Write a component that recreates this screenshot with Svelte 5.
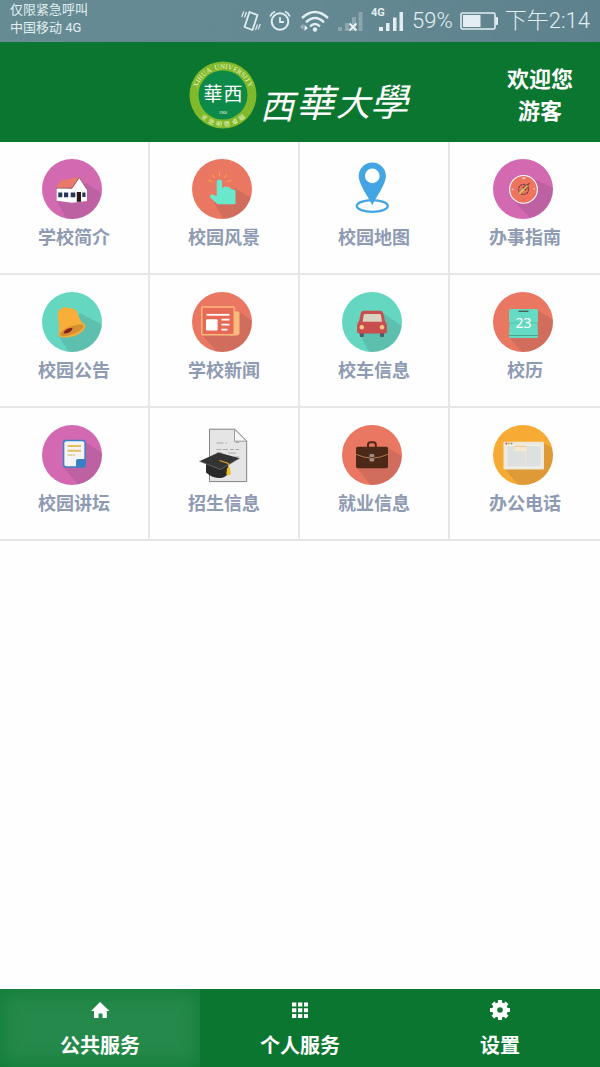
<script lang="ts">
  const services = [
    { id: 'about', label: '学校简介' },
    { id: 'scenery', label: '校园风景' },
    { id: 'map', label: '校园地图' },
    { id: 'guide', label: '办事指南' },
    { id: 'notice', label: '校园公告' },
    { id: 'news', label: '学校新闻' },
    { id: 'bus', label: '校车信息' },
    { id: 'calendar', label: '校历' },
    { id: 'forum', label: '校园讲坛' },
    { id: 'admission', label: '招生信息' },
    { id: 'career', label: '就业信息' },
    { id: 'office', label: '办公电话' },
  ];

  const discs: Record<string, string> = {
    about: '#d369b1',
    scenery: '#ea7762',
    guide: '#d369b1',
    notice: '#65d6bf',
    news: '#ea7762',
    bus: '#65d6bf',
    calendar: '#ea7762',
    forum: '#d369b1',
    career: '#ea7762',
    office: '#f7ab35',
  };

  // long shadow cast to the lower right, clipped to the disc
  const shadows: Record<string, string> = {
    about: '44 24 64 37 64 64 27 64 15 42',
    scenery: '43 29 64 42 64 64 34 64 22 44',
    guide: '41 20 64 31 64 64 42 64 20 41',
    notice: '38 21 64 35 64 64 29 64 16 43',
    news: '47 19 64 32 64 64 29 64 10 43',
    bus: '40 20 64 37 64 64 29 64 17 41',
    calendar: '44 18 64 30 64 64 32 64 16 45',
    forum: '43 17 64 30 64 64 40 64 22 43',
    career: '45 22 64 34 64 64 32 64 14 42',
    office: '50 18 64 25 64 64 29 64 11 43',
  };

  const tabs = [
    { id: 'home', label: '公共服务' },
    { id: 'grid', label: '个人服务' },
    { id: 'gear', label: '设置' },
  ];
  let current = $state('home');
</script>

{#snippet serviceIcon(id: string)}
  <svg class="service-icon" viewBox="0 0 64 60" aria-hidden="true">
    {#if discs[id]}
      <circle cx="30" cy="30" r="30" fill={discs[id]} />
      <g clip-path="url(#disc)">
        <polygon points={shadows[id]} fill="#303040" opacity=".13" />
      </g>
    {/if}
    {#if id === 'about'}
      <path d="M14.7 28.5 29.7 29.5 37.5 18.5 45 30.5V42L30 43.7 14.7 41.7z" fill="#fff" />
      <path d="M13.7 28.8 19.5 21.5 37 18 30 28.8z" fill="#e97a68" />
      <path d="M14 29.2 30 29.2 37.3 18.6 45 30.5" fill="none" stroke="#713c48" stroke-width=".7" />
      <path d="M16.3 33.4h4v4.8h-4zM22 33.4h4.2v4.8H22zM28.7 33.4h4.6v4.8h-4.6zM40.3 33.4h3.2v4.6h-3.2z" fill="#29375f" />
      <path d="M34.8 33h4.2v9.8h-4.2z" fill="#2b1718" />
    {:else if id === 'scenery'}
      <path d="M27.4 13.5v4M20.3 15.5l2 3.4M34.6 15.5l-2 3.4M16 21.3l4.4 1.4M39.4 21.3 35 22.7" stroke="#f9a83c" stroke-width="1" />
      <path d="M24.7 37V23.5q0-3 2.7-3t2.7 3V29l3-1.4 4.3.7 2.2 1.9 3.9 1v14H25.500L18.3 38.500q-1-3.300 2-3z" fill="#6ae8cc" />
    {:else if id === 'map'}
      <ellipse cx="30.3" cy="47" rx="15.5" ry="5.8" fill="none" stroke="#43a5e3" stroke-width="2.3" />
      <path d="M30.3 46.5C28 40 16.7 26 16.7 17a13.6 13.6 0 0 1 27.2 0C43.9 26 32.6 40 30.3 46.5z" fill="#43a5e3" />
      <circle cx="30.3" cy="16.9" r="7.3" fill="#fff" />
    {:else if id === 'guide'}
      <circle cx="30.5" cy="30.4" r="13.9" fill="#ef745e" stroke="#fff" stroke-width="1.1" />
      <circle cx="30.5" cy="30.4" r="5" fill="none" stroke="#6d3540" stroke-width="1.2" stroke-dasharray="2 .8" />
      <path d="M37.3 23 32.5 31.8 29 29z" fill="#703e43" />
      <path d="M23.5 37.5 28.8 28.8 32.3 32z" fill="#b58c79" />
      <path d="M26.5 34.5 34.5 26.5" stroke="#f2bd50" stroke-width="1.7" />
      <path d="M29.2 18.2h3v2h-3zM18.7 29.7h2v1.6h-2zM40.3 29h1.6v1.6h-1.6z" fill="#d2bfd8" />
      <path d="M30 41h1.5" stroke="#b55e55" />
    {:else if id === 'notice'}
      <path d="M16.3 19.5q.8-2.600 3.600-3 1.600-2.300 4.100-1.300l1.500 1q5-.5 7.700 1.500c3.500 3 3.500 9.500 7.700 13.300 2.300 1.500 3.400 3 1.800 5.300C39 43 28 47 18.500 45c-2.300-.5-2.500-2-1.800-4C18 35 15 25 16.300 19.500z" fill="#f8ae38" />
      <ellipse cx="29.7" cy="38.3" rx="12.7" ry="4" fill="#d68f30" transform="rotate(-21 29.7 38.3)" />
      <path d="M21.5 41.3C22.5 37.5 26 36 30.5 36c0 3-4.500 6-9 5.300z" fill="#861f20" />
    {:else if id === 'news'}
      <path d="M42 19.500h4.500q1 0 1 1v20q0 3-3 3H38z" fill="#fcbb7c" />
      <rect x="9.8" y="15" width="32.4" height="27.8" rx="1" fill="#e76a57" stroke="#fcbb7c" stroke-width="1.4" />
      <path d="M14.5 22.8h23" stroke="#fff" stroke-width="1.8" />
      <rect x="14" y="27.3" width="11.6" height="11.2" rx="1" fill="#fff" />
      <path d="M29.5 27.7h8M29.5 32.7h8M29.5 37.7h6" stroke="#fff" stroke-width="1.8" />
    {:else if id === 'bus'}
      <path d="M17.8 38h4v6q0 1-1 1h-2q-1 0-1-1zM38 38h4v6q0 1-1 1h-2q-1 0-1-1z" fill="#535a6e" />
      <path d="M21.5 18.7h17q2.300 0 2.700 2.500L43 29q2 2 2 5v5q0 2.500-2.500 2.500h-25Q15 41.5 15 39v-5q0-3 2-5l1.800-7.800q.4-2.500 2.700-2.500z" fill="#c84f50" />
      <path d="M23 22h14.5q1.300 0 1.500 1.300l1 6.400H20.700l1-6.400Q21.800 22 23 22z" fill="#d9d4c0" />
      <circle cx="19.8" cy="35.3" r="2.2" fill="#fac886" />
      <circle cx="40" cy="35.3" r="2.2" fill="#fac886" />
    {:else if id === 'calendar'}
      <path d="M17.5 17h26q1.500 0 1.500 1.500V30l-.6 1L45 43v1.500q0 1.500-1.500 1.500h-26q-1.500 0-1.500-1.500V43l.6-12-.6-1V18.500q0-1.500 1.500-1.500z" fill="#65dbc3" />
      <path d="M16.5 31h28" stroke="#4fb9a3" stroke-width=".7" />
      <path d="M16 43.5h29" stroke="#46947f" stroke-width=".8" />
      <path d="M25.5 19.3h10" stroke="#476459" stroke-width="1.4" />
      <text x="30.5" y="36" class="day">23</text>
    {:else if id === 'forum'}
      <rect x="21.6" y="15.6" width="21.5" height="26.5" rx="2.5" fill="#f4f4f4" stroke="#3a7fc5" stroke-width="1.5" />
      <path d="M34 42.500V36q0-2 2-2h7.500v6l-2.500 2.500z" fill="#3a7fc5" />
      <path d="M25.5 21h13.500M25.500 25.700h13.500" stroke="#e5bd5c" stroke-width="2" />
      <path d="M25.5 30h7.500" stroke="#cdb563" stroke-width="1.2" stroke-dasharray="4.5 .6" />
    {:else if id === 'admission'}
      <path d="M17.5 4.200h25.200l12 12v40.400H17.500z" fill="#e5e5e5" stroke="#777" stroke-width=".9" />
      <path d="M42.5 4.200v12h12.200z" fill="#f6f6f6" stroke="#888" stroke-width=".8" />
      <path d="M24.5 18h7M33.500 18h1.500M43.500 17.500h3.500M24.500 24.500h5M31 24.500h5M38 24.500h4M43.500 24.500H47M24.500 28h6M36 28h8M42 32h5" stroke="#999" stroke-width=".8" />
      <path d="M14 38v9.500q6 5.500 14 5.500 5 0 9-5V36z" fill="#292929" />
      <path d="M7.3 36.200 26.500 27.500 47.500 33.300 28.500 44.500z" fill="#343434" />
      <path d="M7.3 36.200 28.500 44.500 47.500 33.300" fill="none" stroke="#777" stroke-width=".7" />
      <path d="M27.5 35.500 36.500 38.500V45" fill="none" stroke="#d7a925" stroke-width="1.1" />
      <path d="M35 43h3l.8 6.500q-2.300 1.500-4.500 0z" fill="#e7bd20" />
    {:else if id === 'career'}
      <path d="M26 23v-3q0-2.700 2.500-2.700h2.800q2.500 0 2.500 2.700v3" fill="none" stroke="#4b2817" stroke-width="2" />
      <rect x="14" y="21.8" width="32" height="21.5" rx="1.7" fill="#4b2817" />
      <path d="M14 29.3q16 7.500 32 0" fill="none" stroke="#ad7753" stroke-width="1" />
      <rect x="27.5" y="29" width="4.7" height="7.5" rx=".8" fill="#a18b82" />
      <path d="M27.5 32.5h4.700" stroke="#56392d" />
    {:else if id === 'office'}
      <rect x="10.5" y="16.8" width="40.5" height="27.7" rx="1.3" fill="#ece8dc" />
      <path d="M13.8 20.500h34.500V42H13.800z" fill="#dce0df" stroke="#faf8ef" stroke-width=".8" />
      <path d="M32.5 22v20" stroke="#eee7d6" stroke-width="1" />
      <path d="M21.5 21.500h12v4.700h-12z" fill="#f5e8cd" />
      <path d="M21.5 21.300h12" stroke="#dfbd7c" stroke-width=".8" />
      <circle cx="13.3" cy="18.5" r="1" fill="#d44b3f" />
      <circle cx="15.9" cy="18.5" r="1" fill="#e6a13c" />
      <circle cx="18.5" cy="18.5" r="1" fill="#76a36f" />
    {/if}
  </svg>
{/snippet}

<div class="screen">
  <div class="status-bar">
    <div class="carrier">
      <span>仅限紧急呼叫</span>
      <span>中国移动 4G</span>
    </div>
    <div class="indicators">
      <svg width="20" height="24" viewBox="0 0 20 24" fill="none" stroke="#e2eef1" aria-hidden="true">
        <path d="M8.5 3 16.500 6 11.500 21 3.500 18z" stroke-width="1.8" stroke-linejoin="round" />
        <path d="M.8 8 2.800 2.500M3.500 8.500 5.500 3M14.500 21 16.500 15.500M17.200 20.500l2-5.500" stroke-width="1.2" />
      </svg>
      <svg width="24" height="24" viewBox="0 0 24 24" fill="none" stroke="#e2eef1" aria-hidden="true">
        <circle cx="12" cy="12.5" r="8.3" stroke-width="2" />
        <path d="M12 8v5h4M2 7.500Q3.500 4 7 2.500M22 7.500Q20.500 4 17 2.500" stroke-width="1.8" />
      </svg>
      <svg width="30" height="24" viewBox="0 0 30 24" fill="none" stroke="#e2eef1" aria-hidden="true">
        <path d="M3 9Q16 -3 29 9M7 13.300q9-8.500 18 0M11 17.300q5-4.500 10 0" stroke-width="2.4" />
        <circle cx="16" cy="20.5" r="2.2" fill="#e2eef1" stroke="none" />
        <path d="M4.500 14.500v6.500L1 17.800z" fill="#9cb5bc" stroke="none" />
        <path d="M5.500 16v6l3.500-3z" fill="#e2eef1" stroke="none" />
      </svg>
      <svg width="28" height="24" viewBox="0 0 28 24" aria-hidden="true">
        <path d="M2 18h4v4H2zM9 14h4v8H9zM16 8h4v14h-4zM22.500 3h4v19h-4z" fill="#8ba6ae" />
        <path d="m13.500 14.500 7 7m0-7-7 7" stroke="#edf5f7" stroke-width="1.8" />
      </svg>
      <svg width="34" height="28" viewBox="0 0 34 28" aria-hidden="true">
        <text x="0" y="9" class="network">4G</text>
        <path d="M8 20h4v4H8zM15 16h3.500v8H15zM22 10.500h3.500V24H22zM28.500 5h3.500v19h-3.500z" fill="#e2eef1" />
      </svg>
      <span class="reading">59%</span>
      <svg width="38" height="20" viewBox="0 0 38 20" aria-hidden="true">
        <rect x="1" y="2" width="34" height="16" rx="1.5" fill="none" stroke="#e2eef1" stroke-width="1.6" />
        <path d="M3 4h17.500v12H3zM35.500 6H37q1 0 1 1v6q0 1-1 1h-1.500z" fill="#e2eef1" />
      </svg>
      <span class="reading">下午2:14</span>
    </div>
  </div>

  <header>
    <svg class="brand" width="224" height="72" viewBox="0 0 224 72" role="img" aria-label="西華大學">
      <defs>
        <clipPath id="disc"><circle cx="30" cy="30" r="30" /></clipPath>
        <path id="ring-top" d="M8.5 42A27 27 0 1 1 61.500 42" />
        <path id="ring-bottom" d="M3.5 36A31.500 31.500 0 0 0 66.500 36" />
      </defs>
      <circle cx="35" cy="36" r="33.5" fill="#80b92b" />
      <circle cx="35" cy="36" r="24.5" fill="#0d8948" />
      <text class="ring-en"><textPath href="#ring-top" startOffset="50%">XIHUA&nbsp; UNIVERSITY</textPath></text>
      <text class="ring-cn"><textPath href="#ring-bottom" startOffset="50%">求&nbsp; 是&nbsp; 明&nbsp; 德&nbsp; 卓&nbsp; 越</textPath></text>
      <text x="25" y="42" class="seal">華</text>
      <text x="45" y="42" class="seal">西</text>
      <text x="35" y="55" class="year">1960</text>
      <text x="72" y="60" class="wordmark">西</text>
      <text x="108" y="58" class="wordmark large">華</text>
      <text x="148" y="57" class="wordmark">大</text>
      <text x="182" y="57" class="wordmark large">學</text>
    </svg>
    <div class="welcome">
      <span>欢迎您</span>
      <span>游客</span>
    </div>
  </header>

  <main>
    {#each services as service (service.id)}
      <a class="service" href="#{service.id}">
        {@render serviceIcon(service.id)}
        <span>{service.label}</span>
      </a>
    {/each}
  </main>

  <nav>
    {#each tabs as tab (tab.id)}
      <button class="tab" class:active={current === tab.id} onclick={() => (current = tab.id)}>
        <svg width="22" height="22" viewBox="0 0 22 22" fill="#fff" aria-hidden="true">
          {#if tab.id === 'home'}
            <path d="M11 3 20.500 12h-2.700v7H13.500v-4.500h-4V19H5v-7H2z" />
          {:else if tab.id === 'grid'}
            <path d="M3 3.500h4.300v4H3zM9 3.500h4.300v4H9zM15 3.500h4v4h-4zM3 9.300h4.300v4H3zM9 9.300h4.300v4H9zM15 9.300h4v4h-4zM3 15h4.300v4H3zM9 15h4.300v4H9zM15 15h4v4h-4z" />
          {:else}
            <circle cx="11" cy="11" r="5.3" fill="none" stroke="#fff" stroke-width="5" />
            <path d="M11 1v3.500M11 17.500V21M1 11h3.500M17.500 11H21M3.900 3.900l2.500 2.500M15.600 15.600l2.500 2.500M3.900 18.100l2.500-2.500M15.600 6.400l2.500-2.500" stroke="#fff" stroke-width="4" />
          {/if}
        </svg>
        <span>{tab.label}</span>
      </button>
    {/each}
  </nav>
</div>

<style>
  :global(body) {
    margin: 0;
    background: #fefefe;
  }
  .screen {
    display: flex;
    flex-direction: column;
    min-height: 100vh;
    font-family: Roboto, "Noto Sans CJK SC", sans-serif;
  }
  .status-bar {
    display: flex;
    justify-content: space-between;
    align-items: center;
    height: 42px;
    padding: 0 10px;
    box-sizing: border-box;
    color: #e2eef1;
    background: linear-gradient(100deg, #668b93, #648993 50%, #5d828d);
  }
  .carrier {
    display: flex;
    flex-direction: column;
    padding-bottom: 4px;
    font-size: 13px;
    line-height: 18px;
  }
  .indicators {
    display: flex;
    align-items: center;
    gap: 7px;
  }
  .reading {
    font-size: 22px;
    font-weight: 300;
    line-height: 32px;
    white-space: nowrap;
  }
  .network {
    font: bold 11px Roboto, sans-serif;
    fill: #e2eef1;
  }
  header {
    display: grid;
    grid-template-columns: 1fr auto 1fr;
    align-items: center;
    height: 100px;
    color: #fff;
    background: #0b7630;
  }
  .brand {
    grid-column: 2;
    margin-top: 6px;
  }
  .brand text {
    fill: #fff;
  }
  .brand .ring-en {
    font: 7px "Liberation Serif", serif;
    text-anchor: middle;
    fill: #eef6cf;
  }
  .brand .ring-cn {
    font: 6px "Noto Sans CJK SC", sans-serif;
    text-anchor: middle;
    fill: #eef6cf;
  }
  .brand .seal {
    font: 19px "Noto Sans CJK TC", sans-serif;
    text-anchor: middle;
  }
  .brand .year {
    font: 4px "Liberation Serif", serif;
    text-anchor: middle;
  }
  .wordmark {
    font: italic 400 34px "Noto Sans CJK TC", sans-serif;
  }
  .wordmark.large {
    font-size: 38px;
  }
  .welcome {
    display: flex;
    flex-direction: column;
    justify-self: end;
    width: 120px;
    margin-top: 8px;
    font-size: 22px;
    font-weight: 700;
    line-height: 32px;
    text-align: center;
  }
  main {
    display: grid;
    grid-template-columns: repeat(4, 1fr);
  }
  .service {
    display: flex;
    flex-direction: column;
    align-items: center;
    height: 133px;
    padding-top: 17px;
    box-sizing: border-box;
    border-right: 2px solid #e6e6e6;
    border-bottom: 2px solid #e6e6e6;
    color: #8f9ab3;
    font-size: 18px;
    font-weight: 700;
    line-height: 38px;
    text-decoration: none;
  }
  .service:nth-child(4n) {
    border-right: 0;
  }
  .service-icon {
    width: 64px;
    height: 60px;
  }
  .day {
    font: 14px "Noto Sans", sans-serif;
    text-anchor: middle;
    fill: #fff;
  }
  nav {
    display: grid;
    grid-template-columns: repeat(3, 1fr);
    margin-top: auto;
    background: #0b7630;
  }
  .tab {
    display: flex;
    flex-direction: column;
    align-items: center;
    gap: 9px;
    height: 78px;
    padding: 10px 0 0;
    border: 0;
    background: none;
    color: #fff;
    font: inherit;
    font-size: 20px;
    font-weight: 700;
    line-height: 32px;
    cursor: pointer;
  }
  .tab.active {
    background: #24894a;
    box-shadow: inset 0 0 20px #0f7a35;
  }
</style>
